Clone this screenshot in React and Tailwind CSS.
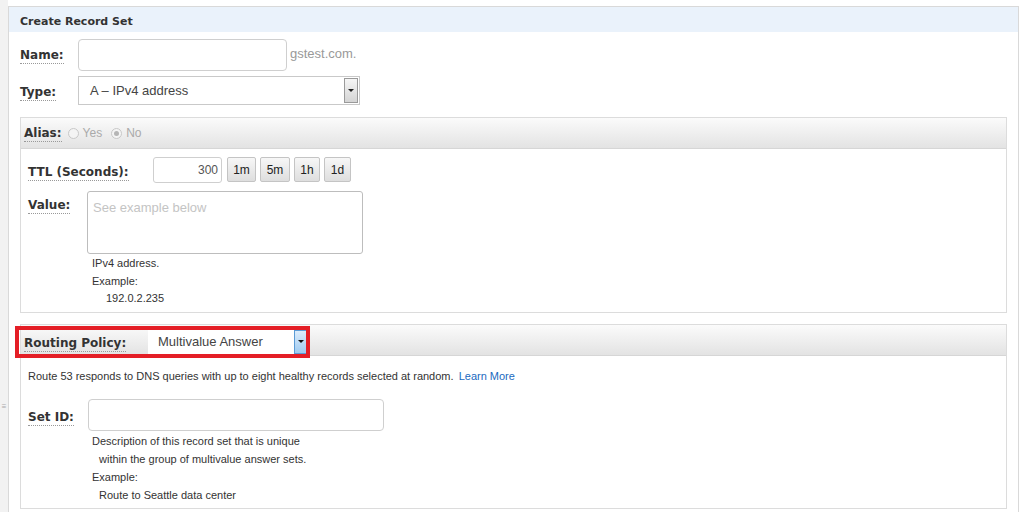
import React from 'react';

const LABEL = "inline-block font-['DejaVu_Sans',sans-serif] font-bold text-[12px] text-[#333] border-b border-dotted border-[#999] leading-[16px]";
const BODY = "font-['Liberation_Sans',Arial,sans-serif]";

const Label = ({ children, className = '' }) => (
    <span className={`${LABEL} ${className}`}>{children}</span>
);

const PanelHeader = ({ children, className = '' }) => (
    <div className={`h-[31px] flex items-center bg-gradient-to-b from-[#fbfbfb] to-[#e3e3e3] border-b border-[#d6d6d6] ${className}`}>
        {children}
    </div>
);

const Radio = ({ checked }) => (
    <span className="w-[11px] h-[11px] rounded-full border border-[#c8c8c8] bg-[#f4f4f4] flex items-center justify-center">
        {checked && <span className="w-[5px] h-[5px] rounded-full bg-[#b5b5b5]" />}
    </span>
);

const DurBtn = ({ children, w }) => (
    <button className={`${w} h-[25px] rounded-[2px] border border-[#c4c4c4] bg-gradient-to-b from-[#f7f7f7] to-[#dedede] text-[12px] text-[#222] ${BODY}`}>
        {children}
    </button>
);

export default function App() {
    return (
        <div className={`w-[1024px] h-[512px] overflow-hidden bg-white flex ${BODY}`}>
            {/* left gutter */}
            <div className="w-[8px] bg-[#f2f2f2] flex flex-col items-center pt-[403px]">
                <span className="text-[8px] leading-none text-[#aaa]">≡</span>
            </div>

            {/* main panel */}
            <div className="mt-[6px] w-[1011px] border border-b-0 border-[#d9d9d9] flex flex-col">
                <div className="h-[25px] bg-[#eaf2fb] flex items-end pb-[3px] px-[11px]">
                    <span className="font-['DejaVu_Sans',sans-serif] font-bold text-[11px] leading-[14px] text-[#333]">Create Record Set</span>
                </div>

                <div className="pl-[11px] pr-[11px] flex flex-col">
                    {/* Name */}
                    <div className="flex items-center mt-[7px] h-[32px]">
                        <div className="w-[58px] pb-[3px]"><Label>Name:</Label></div>
                        <div className="w-[209px] h-[32px] rounded-[4px] border border-[#cfcfcf] bg-white" />
                        <span className="ml-[3px] pb-[3px] text-[13px] text-[#999]">gstest.com.</span>
                    </div>

                    {/* Type */}
                    <div className="flex items-center mt-[5px] h-[29px]">
                        <div className="w-[58px]"><Label>Type:</Label></div>
                        <div className="w-[282px] h-[29px] border border-[#c9c9c9] bg-white flex items-center">
                            <span className="flex-1 pl-[11px] text-[13px] text-[#444]">A – IPv4 address</span>
                            <span className="w-[14px] h-[25px] mr-[1px] border border-[#9a9a9a] bg-gradient-to-b from-[#f6f6f6] to-[#d4d4d4] flex items-center justify-center">
                                <span className="w-0 h-0 border-l-[3px] border-r-[3px] border-t-[3px] border-l-transparent border-r-transparent border-t-[#222]" />
                            </span>
                        </div>
                    </div>

                    {/* Alias panel */}
                    <div className="mt-[12px] h-[196px] border border-[#dcdcdc] flex flex-col">
                        <PanelHeader className="px-[3px]">
                            <Label>Alias:</Label>
                            <span className="ml-[6px] flex items-center gap-[4px]">
                                <Radio />
                                <span className="text-[12px] text-[#aaa]">Yes</span>
                            </span>
                            <span className="ml-[9px] flex items-center gap-[4px]">
                                <Radio checked />
                                <span className="text-[12px] text-[#aaa]">No</span>
                            </span>
                        </PanelHeader>

                        <div className="px-[7px] flex flex-col">
                            <div className="flex items-center mt-[8px] h-[26px]">
                                <div className="w-[125px] pt-[2px]"><Label>TTL (Seconds):</Label></div>
                                <div className="w-[69px] h-[26px] rounded-[3px] border border-[#cfcfcf] flex items-center justify-end pr-[3px] text-[12px] text-[#555]">300</div>
                                <div className="flex gap-[4px] ml-[5px] self-start">
                                    <DurBtn w="w-[29px]">1m</DurBtn>
                                    <DurBtn w="w-[30px]">5m</DurBtn>
                                    <DurBtn w="w-[26px]">1h</DurBtn>
                                    <DurBtn w="w-[27px]">1d</DurBtn>
                                </div>
                            </div>

                            <div className="flex mt-[8px]">
                                <div className="w-[59px] pt-[1px]"><Label>Value:</Label></div>
                                <div className="flex flex-col">
                                    <div className="w-[276px] h-[63px] rounded-[3px] border border-[#bdbdbd] px-[5px] pt-[8px] text-[13px] text-[#c4c4c4] leading-[16px]">See example below</div>
                                    <div className="pl-[5px] text-[11px] text-[#333] leading-[18px]">
                                        <div>IPv4 address.</div>
                                        <div>Example:</div>
                                        <div className="pl-[14px] leading-[16px]">192.0.2.235</div>
                                    </div>
                                </div>
                            </div>
                        </div>
                    </div>

                    {/* Routing panel */}
                    <div className="mt-[11px] h-[185px] border border-[#dcdcdc] flex flex-col relative">
                        <PanelHeader className="px-[3px] pt-[3px]">
                            <div className="w-[124px]">
                                <Label>Routing Policy:</Label>
                            </div>
                            <div className="w-[159px] h-[24px] bg-white flex items-center">
                                <span className="flex-1 pl-[10px] text-[13px] text-[#444]">Multivalue Answer</span>
                                <span className="w-[13px] h-[24px] border border-[#5b9bd5] bg-gradient-to-b from-[#dcecfb] to-[#9fcbf0] flex items-center justify-center">
                                    <span className="w-0 h-0 border-l-[3px] border-r-[3px] border-t-[3px] border-l-transparent border-r-transparent border-t-[#111]" />
                                </span>
                            </div>
                        </PanelHeader>
                        {/* highlight annotation */}
                        <div className="absolute left-[-6px] top-[1px] w-[295px] h-[32px] border-4 border-[#e41e26] pointer-events-none" />

                        <div className="px-[7px] flex flex-col">
                            <div className="mt-[12px] text-[11px] text-[#333] leading-[16px]">
                                Route 53 responds to DNS queries with up to eight healthy records selected at random. <span className="ml-[2px] text-[#1b6ac0]">Learn More</span>
                            </div>

                            <div className="flex items-center mt-[15px] h-[32px]">
                                <div className="w-[60px] pt-[2px]"><Label>Set ID:</Label></div>
                                <div className="w-[296px] h-[32px] rounded-[4px] border border-[#cfcfcf]" />
                            </div>

                            <div className="pl-[64px] pt-[1px] text-[11px] text-[#333] leading-[18px]">
                                <div>Description of this record set that is unique</div>
                                <div className="pl-[7px]">within the group of multivalue answer sets.</div>
                                <div>Example:</div>
                                <div className="pl-[7px]">Route to Seattle data center</div>
                            </div>
                        </div>
                    </div>
                </div>
            </div>
        </div>
    );
}
